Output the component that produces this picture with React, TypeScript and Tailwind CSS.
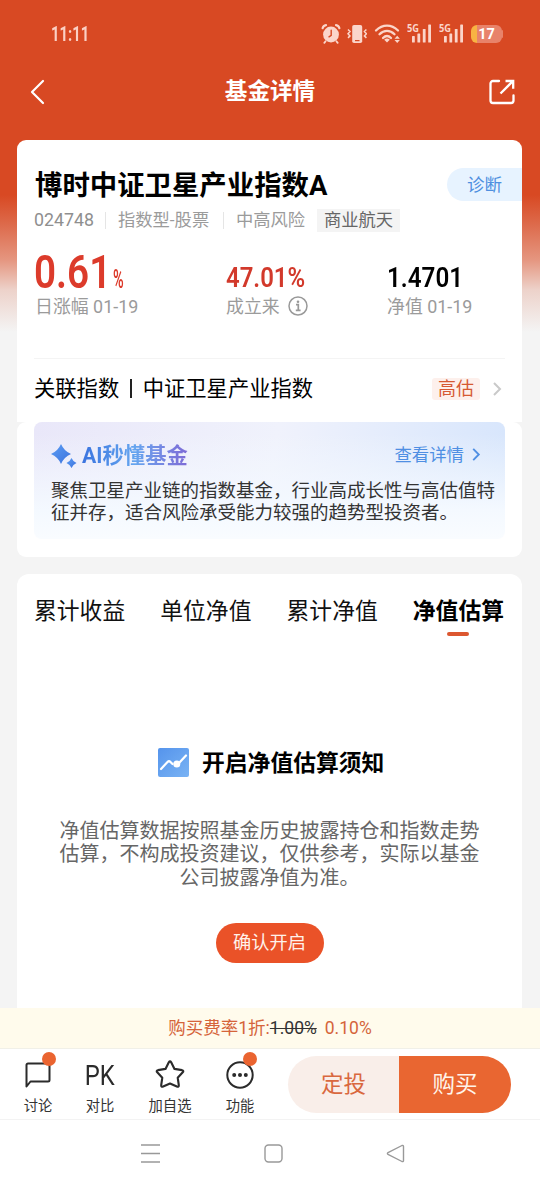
import React from 'react';

const tabs = ['累计收益', '单位净值', '累计净值', '净值估算'];

const Signal: React.FC = () => (
  <svg width="26" height="22" viewBox="0 0 26 22" fill="#fbd5ca">
    <text x="0" y="9" fontSize="10" fontWeight="700" fontFamily="Noto Sans, sans-serif" textLength="12" lengthAdjust="spacingAndGlyphs">5G</text>
    <rect x="5" y="13" width="2.800" height="6.500" rx="0.600" />
    <rect x="10.400" y="10.500" width="2.800" height="9" rx="0.600" />
    <rect x="15.800" y="6" width="2.800" height="13.500" rx="0.600" />
    <rect x="21.200" y="1.500" width="2.800" height="18" rx="0.600" />
  </svg>
);

const StatusBar: React.FC = () => (
  <div className="flex h-[68px] items-center pl-[51px] pr-[37px]">
    <span className="mt-px w-[60px] origin-left scale-x-[0.740] text-[20px] font-bold text-[#fbd0c4]">11:11</span>
    <div className="ml-auto flex items-center">
      <svg width="20" height="22" viewBox="0 0 20 22" fill="none" stroke="#fbd5ca" strokeLinecap="round">
        <circle cx="10" cy="11.500" r="7.900" fill="#fbd5ca" stroke="none" />
        <path d="M1.600 5.200C2 3.600 3.300 2.500 5 2.200M18.400 5.200C18 3.600 16.700 2.500 15 2.200" strokeWidth="2.200" />
        <path d="M4.600 18.200l-1.300 1.700M15.400 18.200l1.300 1.700" strokeWidth="1.800" />
        <path d="M10.200 7.300v5L8 13.800" stroke="#d84923" strokeWidth="1.400" />
      </svg>
      <svg className="ml-[6px] mr-px" width="20" height="22" viewBox="0 0 20 22" fill="none" stroke="#fbd5ca">
        <rect x="5.200" y="2" width="10" height="18" rx="1.800" fill="#fbd5ca" stroke="none" />
        <path d="M8 17.600h4.500" stroke="#d84923" strokeWidth="1.200" />
        <path d="M1 6.500l2 2-2 2.200 2 2.200-2 2M19.400 6.500l-2 2 2 2.200-2 2.200 2 2" strokeWidth="1.500" />
      </svg>
      <svg className="ml-[6px] mr-px" width="27" height="22" viewBox="0 0 27 22" fill="none" stroke="#fbd5ca" strokeLinecap="round">
        <path d="M2 7.500C8.500 1 17.500 1 24 7.500M5.500 11.300c4.500-4.500 10.500-4.500 15 0M9 15c2.500-2.500 5.500-2.500 8 0" strokeWidth="2.300" />
        <path d="M10.200 16.800a4 4 0 0 1 5.600 0L13 19.600z" fill="#fbd5ca" stroke="none" />
        <path d="M20.500 15.800l2.700-3 2.700 3zM20.500 17l2.700 3 2.700-3z" fill="#fbd5ca" stroke="none" />
      </svg>
      <div className="ml-[5px] flex gap-[6px]">
        <Signal />
        <Signal />
      </div>
      <div className="ml-[6px] mt-px flex items-center">
        <div className="flex h-[18px] w-[31px] items-center justify-center rounded-[6px] bg-linear-to-r from-[#f8b343] from-20% to-[#e8836a] to-20% text-[14.500px] font-bold text-white">
          17
        </div>
        <div className="h-2 w-px rounded-r bg-[#e8836a]" />
      </div>
    </div>
  </div>
);

const NavBar: React.FC = () => (
  <div className="flex h-[72px] items-start pl-[30px] pr-[25px] pt-[11px] text-white">
    <svg width="15" height="26" viewBox="0 0 15 26" fill="none" stroke="currentColor" strokeWidth="2.200">
      <path d="M13 2L2 13l11 11" strokeLinecap="round" strokeLinejoin="round" />
    </svg>
    <h1 className="flex-1 pl-[6px] text-center text-[22.600px] leading-[26px] font-bold">基金详情</h1>
    <svg width="26" height="26" viewBox="0 0 26 26" fill="none" stroke="currentColor" strokeWidth="2.300">
      <path d="M10 2H4a2.500 2.500 0 0 0-2.500 2.500v17A2.500 2.500 0 0 0 4 24h18a2.500 2.500 0 0 0 2.500-2.500v-5" strokeLinecap="round" />
      <path d="M11.500 14.500L23.500 2.500M16.500 2h7.700v7.700" />
    </svg>
  </div>
);

const Chevron: React.FC<{ className: string }> = ({ className }) => (
  <svg className={className} width="10" height="14" viewBox="0 0 10 14" fill="none" stroke="currentColor" strokeWidth="2">
    <path d="M2 1l6 6-6 6" />
  </svg>
);

const FundSummary: React.FC = () => (
  <section className="h-[282px] rounded-t-[9px] bg-white">
    <div className="flex items-center pt-[28px] pl-[18px]">
      <h2 className="pt-px text-[27.400px] leading-[34px] font-bold text-black">博时中证卫星产业指数A</h2>
      <button className="mb-px ml-auto h-[33px] w-[75px] rounded-l-full bg-[#e7f3ff] pt-px text-[17.500px] text-[#4e8fe0]">诊断</button>
    </div>
    <div className="mt-[6px] flex h-[23px] items-center pl-[17px] text-[17.300px] text-[#9b9b9b]">
      <span className="w-[71px] text-[17.800px] text-[#8f8f8f]">024748</span>
      <span className="mr-[12px] h-[17px] border-l border-[#e5e5e5]" />
      <span className="w-[105px] pt-px">指数型-股票</span>
      <span className="mr-[12px] h-[17px] border-l border-[#e5e5e5]" />
      <span className="w-[81px] pt-px">中高风险</span>
      <span className="h-[23px] bg-[#f4f4f4] px-[7px] leading-[23px] text-[#666]">商业航天</span>
    </div>
    <div className="flex h-[126px] pl-[18px] pt-[20px]">
      <div className="w-[191px]">
        <div className="flex h-[44px] items-start text-[#dc3b2b]">
          <span className="-ml-px w-[79px] origin-left scale-x-[0.840] text-[46px] leading-[41px] font-semibold">0.61</span>
          <span className="origin-left scale-x-[0.580] pt-[14px] text-[25px] leading-[28px] font-semibold">%</span>
        </div>
        <div className="text-[17.900px] leading-[22px] text-[#9b9b9b]">日涨幅 01-19</div>
      </div>
      <div className="w-[161px]">
        <div className="h-[44px] origin-left scale-x-[0.855] pt-[12px] text-[28px] leading-[28px] font-semibold whitespace-nowrap text-[#d2392b]">
          47.01%
        </div>
        <div className="flex items-center text-[17.900px] leading-[22px] text-[#9b9b9b]">
          成立来
          <svg className="ml-[8px] mb-px" width="20" height="20" viewBox="0 0 20 20" fill="none" stroke="#999">
            <circle cx="10" cy="10" r="9" strokeWidth="1.500" />
            <path d="M8 8.700h2.300v5.300M7.800 14.300h4.800" strokeWidth="1.700" />
            <circle cx="10" cy="5.700" r="1.300" fill="#999" stroke="none" />
          </svg>
        </div>
      </div>
      <div>
        <div className="h-[44px] origin-left scale-x-[0.865] pt-[12px] text-[28px] leading-[28px] font-semibold text-black">1.4701</div>
        <div className="text-[17.900px] leading-[22px] text-[#9b9b9b]">净值 01-19</div>
      </div>
    </div>
    <div className="mx-[17px] flex h-[61px] items-center border-t border-[#f4f4f4] text-[21.300px] text-black">
      <span className="pt-px">关联指数</span>
      <span className="mr-[11px] ml-[11px] h-[19px] w-[1.500px] bg-[#222]" />
      <span className="pt-px">中证卫星产业指数</span>
      <span className="ml-auto h-[22px] rounded-[3px] bg-[#fdf0ec] px-[6px] text-[18px] leading-[22px] text-[#d65a33]">高估</span>
      <Chevron className="ml-[12px] mr-[3px] text-[#c9c9c9]" />
    </div>
  </section>
);

const AiSummary: React.FC = () => (
  <section className="h-[135px] rounded-[9px] bg-white px-[17px]">
    <div className="h-[117px] rounded-[8px] bg-[linear-gradient(to_bottom,rgba(247,251,255,0)_10%,#f4f9ff_75%,#f9fcff)_,linear-gradient(100deg,#e9e7f9,#f0f2fc_50%,#d6e5fc)] pt-[20px]">
      <div className="flex h-[26px] items-center pl-[17px] pr-[23px]">
        <svg width="27" height="26" viewBox="0 0 27 26" fill="url(#spark)">
          <defs>
            <linearGradient id="spark" x1="0" y1="0" x2="1" y2="1">
              <stop stopColor="#5b9df5" />
              <stop offset="1" stopColor="#3c72dc" />
            </linearGradient>
          </defs>
          <path d="M10 2Q13 9 20 12Q13 15 10 22Q7 15 0 12Q7 9 10 2z" />
          <path d="M20.500 16Q22 19.500 25.500 21Q22 22.500 20.500 26Q19 22.500 15.500 21Q19 19.500 20.500 16z" />
        </svg>
        <h3 className="mt-[3px] ml-1 bg-linear-to-r from-[#3b74df] via-[#65a5ef] to-[#7d6ad6] bg-clip-text text-[21.300px] leading-[28px] font-bold text-transparent">
          AI秒懂基金
        </h3>
        <span className="ml-auto pt-px text-[17.400px] text-[#4f8fe3]">查看详情</span>
        <Chevron className="mr-px ml-[7px] h-[13px] text-[#4f8fe3]" />
      </div>
      <p className="mt-[12px] pl-[17px] text-[18.500px] leading-[22px] whitespace-nowrap text-[#333]">
        聚焦卫星产业链的指数基金，行业高成长性与高估值特
        <br />
        征并存，适合风险承受能力较强的趋势型投资者。
      </p>
    </div>
  </section>
);

const EstimatePanel: React.FC = () => (
  <section className="mt-[17px] h-[434px] rounded-t-[12px] bg-white">
    <div className="flex justify-between pt-[22px] pl-[17px] pr-[18px]">
      {tabs.map((tab) => {
        const active = tab === '净值估算';
        return (
          <div key={tab} className="flex flex-col items-center">
            <span className={active ? 'text-[22.800px] leading-[32px] font-bold text-black' : 'text-[22.800px] leading-[32px] text-[#111]'}>{tab}</span>
            {active && <span className="mt-[4px] h-[4px] w-[22px] rounded-full bg-[#dc5730]" />}
          </div>
        );
      })}
    </div>
    <div className="mt-[112px] flex h-[30px] items-center pl-[141px]">
      <svg width="31" height="29" viewBox="0 0 31 29" fill="none">
        <defs>
          <linearGradient id="chart" x1="0" y1="0" x2="1" y2="1">
            <stop stopColor="#5594ec" />
            <stop offset="1" stopColor="#79b3f4" />
          </linearGradient>
        </defs>
        <rect width="31" height="29" rx="2" fill="url(#chart)" />
        <path d="M3 21l6.500-7q1.500-1.500 3 0l2 2M21.500 14.500L28 7.500" stroke="#fff" strokeWidth="2.200" strokeLinecap="round" />
        <circle cx="18.800" cy="16" r="3.500" fill="#fff" />
      </svg>
      <h3 className="mt-[3px] ml-[13px] text-[22.800px] font-bold text-black">开启净值估算须知</h3>
    </div>
    <p className="mt-[42px] text-center text-[20px] leading-[23.500px] text-[#666]">
      净值估算数据按照基金历史披露持仓和指数走势
      <br />
      估算，不构成投资建议，仅供参考，实际以基金
      <br />
      公司披露净值为准。
    </p>
    <button className="mx-auto mt-[33px] block h-[40px] w-[108px] rounded-full bg-[#ea5228] text-[18.200px] text-[#fff1ea]">确认开启</button>
  </section>
);

interface ActionProps {
  label: string;
  badge?: boolean;
  children: React.ReactNode;
}

const Action: React.FC<ActionProps> = ({ label, badge, children }) => (
  <div className="flex w-[70px] flex-col items-center">
    <div className="relative flex h-[30px] items-center justify-center text-[#2b2b2b]">
      {children}
      {badge && <span className="absolute -top-[8px] left-[17px] size-[14px] rounded-full bg-[#ea6430]" />}
    </div>
    <span className="mt-[6px] text-[14.300px] leading-[20px] text-[#333]">{label}</span>
  </div>
);

const BottomBar: React.FC = () => (
  <div className="flex h-[72px] border-b border-[#f3f3f3] bg-white pl-[3px]">
    <div className="flex pt-[11px]">
      <div className="-mr-2">
        <Action label="讨论" badge>
          <svg width="26" height="28" viewBox="0 0 26 28" fill="none" stroke="currentColor" strokeWidth="2" strokeLinejoin="round">
            <path d="M1.500 25.500V4a1.500 1.500 0 0 1 1.500-1.500h20A1.500 1.500 0 0 1 24.500 4v15a1.500 1.500 0 0 1-1.500 1.500H5.500z" />
          </svg>
        </Action>
      </div>
      <Action label="对比">
        <span className="origin-center scale-x-[0.850] pt-[3px] text-[28px] leading-[30px]">PK</span>
      </Action>
      <Action label="加自选">
        <svg width="30" height="30" viewBox="0 0 28 28" fill="none" stroke="currentColor" strokeWidth="2" strokeLinejoin="round">
          <path d="M12.900 2.200q1.100-1.800 2.200 0l3.100 6.100 7 1.200q2 .5.700 2l-4.700 5 1 7q0 2-1.800 1.300L14 21.900l-6.400 2.900q-1.800.700-1.800-1.300l1-7-4.700-5q-1.300-1.500.7-2l7-1.200z" />
        </svg>
      </Action>
      <Action label="功能" badge>
        <svg width="28" height="28" viewBox="0 0 28 28" fill="currentColor">
          <circle cx="14" cy="14" r="12.700" fill="none" stroke="currentColor" strokeWidth="2" />
          <circle cx="8.200" cy="14" r="2" />
          <circle cx="14" cy="14" r="2" />
          <circle cx="19.800" cy="14" r="2" />
        </svg>
      </Action>
    </div>
    <div className="mt-[7px] ml-[13px] flex h-[57px] text-[22.500px]">
      <button className="w-[111px] rounded-l-full bg-[#f9eee9] pt-[2px] text-[#d9683f]">定投</button>
      <button className="w-[112px] rounded-r-full bg-[#e96631] pt-[2px] text-[#fff4ea]">购买</button>
    </div>
  </div>
);

const SystemNav: React.FC = () => (
  <div className="flex h-[67px] items-center justify-between bg-white pl-[141px] pr-[135px]">
    <svg width="19" height="19" viewBox="0 0 19 19" stroke="#999" strokeWidth="1.500">
      <path d="M0 1h19M0 9.500h19M0 18h19" />
    </svg>
    <svg width="19" height="19" viewBox="0 0 19 19" fill="none" stroke="#999" strokeWidth="1.400">
      <rect x="1" y="1" width="17" height="17" rx="3.500" />
    </svg>
    <svg width="19" height="19" viewBox="0 0 19 19" fill="none" stroke="#999" strokeWidth="1.400" strokeLinejoin="round">
      <path d="M16 1.500L2 8.700q-1.200.8 0 1.600L16 17.500q1.500.5 1.500-1V2.500q0-1.500-1.500-1z" />
    </svg>
  </div>
);

const App: React.FC = () => (
  <div className="flex h-[1187px] w-[540px] flex-col overflow-hidden bg-[#f4f4f4] bg-[linear-gradient(to_bottom,#d84923_0,#d84923_195px,#dd6b4c_225px,#e59680_260px,#edd2ca_290px,#f4f4f4_332px)] font-['Roboto','Noto_Sans_CJK_SC',sans-serif]" lang="zh-CN">
    <StatusBar />
    <NavBar />
    <main className="pr-[18px] pl-[17px]">
      <FundSummary />
      <AiSummary />
      <EstimatePanel />
    </main>
    <div className="flex h-[41px] shrink-0 items-center justify-center border-b border-[#f1f0e8] bg-[#fffbec] pt-px text-[17.500px] text-[#d5643a]">
      <span>购买费率1折:</span>
      <span className="text-[#333] line-through">1.00%</span>
      <span className="ml-[8px]">0.10%</span>
    </div>
    <BottomBar />
    <SystemNav />
  </div>
);

export default App;
